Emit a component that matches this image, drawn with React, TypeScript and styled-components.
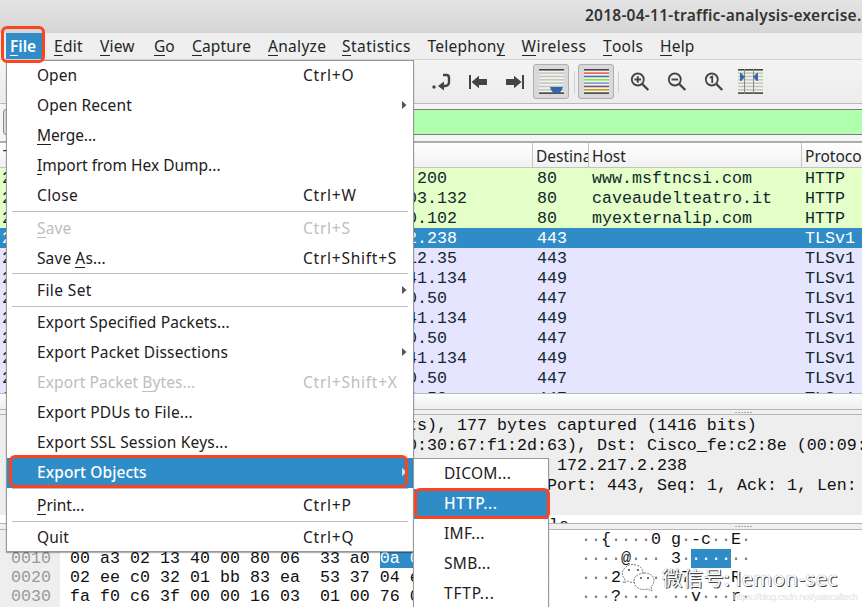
import React from 'react';
import styled, { createGlobalStyle } from 'styled-components';

const Global = createGlobalStyle`
  * { box-sizing: border-box; }
  html, body { margin: 0; background: #fff; overflow: hidden; }
  body { font: 15.5px "Noto Sans", "Noto Sans CJK SC", sans-serif; color: #232627; }
`;

const Window = styled.div`
  position: relative; width: 862px; height: 607px; overflow: hidden;
  display: flex; flex-direction: column; background: #f0f0f0;
`;
const TitleBar = styled.header`
  flex: 0 0 33px; padding-left: 585px; line-height: 31px; white-space: nowrap; overflow: hidden;
  font-weight: 600; font-size: 15.5px; letter-spacing: 0.24px; color: #333;
  background: linear-gradient(#e4e4e4, #d5d5d5);
`;
const MenuBar = styled.nav`
  flex: 0 0 27px; display: flex; padding-left: 6px; background: #efefef; border-bottom: 1px solid #d2d2d2;
`;
const MenuTitle = styled.div<{ $w: number; $on?: boolean; $ls?: number }>`
  width: ${p => p.$w}px; height: 26px; padding-left: 4px; line-height: 27px; white-space: nowrap;
  letter-spacing: ${p => p.$ls ?? 0}px;
  color: ${p => (p.$on ? '#fff' : '#232627')};
  font-weight: ${p => (p.$on ? 600 : 400)};
  background: ${p => (p.$on ? 'linear-gradient(90deg, #308cc6 36px, transparent 36px)' : 'none')};
`;
const Key = styled.span`
  border-bottom: 1px solid currentColor; display: inline-block; line-height: 17px;
`;
const ToolBar = styled.div`
  flex: 0 0 44px; display: flex; align-items: center; padding-left: 423px;
  background: linear-gradient(#f4f4f4, #ececec); border-bottom: 1px solid #b9b9b9;
`;
const Tool = styled.div<{ $w: number; $on?: boolean }>`
  width: ${p => p.$w}px; height: 35px; flex: none; display: flex; align-items: center; justify-content: center;
  border-radius: 3px; border: 1px solid ${p => (p.$on ? '#aeaeae' : 'transparent')};
  background: ${p => (p.$on ? '#d9d9d9' : 'transparent')};
`;
const Divider = styled.i<{ $l: number; $r: number }>`
  width: 1px; height: 22px; background: #cfcfcf; margin: 0 ${p => p.$r}px 0 ${p => p.$l}px;
`;
const FilterBar = styled.div`
  flex: 0 0 37px; padding: 5px 0 6px 3px; background: #f5f5f5; display: flex;
`;
const FilterButton = styled.div`
  width: 24px; background: #dcdcdc; border: 1px solid #8d8d8d; border-radius: 3px 0 0 3px;
`;
const FilterInput = styled.div`
  flex: 1; background: #afffaf; border: solid #7d7d7d; border-width: 1px 0;
`;
const ColumnHeads = styled.div`
  flex: 0 0 27px; display: flex; border-top: 2px solid #adadad; border-bottom: 1px solid #c4c4c4;
  background: linear-gradient(#fff, #f1f1f1);
`;
const Head = styled.div<{ $w: number; $line?: boolean }>`
  width: ${p => p.$w}px; height: 24px; padding-left: 3px; line-height: 26px; overflow: hidden; white-space: nowrap;
  font-size: 15.5px; border-left: ${p => (p.$line ? '1px solid #c4c4c4' : '0')};
`;
const mono = `font-family: "Liberation Mono", monospace; font-size: 16.67px; white-space: pre;`;
const Packets = styled.div`
  flex: 0 0 225px; overflow: hidden; background: #e6e5ff;
`;
const Packet = styled.div<{ $kind: string }>`
  ${mono}
  display: flex; height: 20px; line-height: 22px; padding-left: 2px;
  color: ${p => (p.$kind === 'sel' ? '#fff' : '#12272e')};
  background: ${p => (p.$kind === 'sel' ? '#308cc6' : p.$kind === 'http' ? '#e4ffc7' : '#e6e5ff')};
`;
const Cell = styled.span<{ $w: number }>`width: ${p => p.$w}px;`;
const ScrollTrack = styled.div`
  flex: 0 0 16px; background: linear-gradient(#fdfdfd, #eee); border-top: 1px solid #bbb;
`;
const Splitter = styled.div<{ $h?: number }>`
  flex: 0 0 ${p => p.$h ?? 6}px; border: solid #b5b5b5; border-width: 1px 0; background: #f0f0f0; padding-left: 735px;
  display: flex; align-items: center; gap: 1px;
`;
const Grip = styled.i`width: 2px; height: 1px; background: #a9a9a9;`;
const Details = styled.div`
  flex: 0 0 108px; background: #fff; overflow: hidden;
`;
const DetailRow = styled.div<{ $h?: number; $x?: number; $plain?: boolean }>`
  ${mono}
  height: ${p => p.$h ?? 20}px; line-height: 22px; color: #111;
  padding-left: ${p => p.$x ?? 407}px; background: ${p => (p.$plain ? '#fff' : '#eeeeee')}; overflow: hidden;
`;
const HexPane = styled.div`
  flex: 1; display: flex; background: #fff; overflow: hidden;
`;
const HexColumn = styled.div<{ $w: number; $pad: number; $dim?: boolean }>`
  ${mono}
  width: ${p => p.$w}px; flex: none; padding-left: ${p => p.$pad}px; line-height: 19px;
  color: ${p => (p.$dim ? '#999' : '#111')}; background: ${p => (p.$dim ? '#eee' : 'transparent')};
`;
const Mark = styled.span`background: #308cc6; color: #fff; display: inline-block; height: 19px; vertical-align: top;`;
const Dot = styled.span`color: #777;`;

const Popup = styled.div<{ $x: number; $y: number; $w: number; $h: number }>`
  position: absolute; left: ${p => p.$x}px; top: ${p => p.$y}px; width: ${p => p.$w}px; height: ${p => p.$h}px;
  background: #fff; border: 1px solid #999; color: #1d2021;
  box-shadow: 0 1px 1px rgba(0,0,0,.3);
`;
const Item = styled.div<{ $on?: boolean; $off?: boolean; $ls?: number }>`
  display: grid; grid-template-columns: 266px 98px 1fr; align-items: center; height: 30px; line-height: 20px;
  padding: 0 0 1.6px 30px; white-space: nowrap; letter-spacing: ${p => p.$ls ?? 0}px;
  color: ${p => (p.$on ? '#fff' : p.$off ? '#bcbebf' : '#1d2021')};
  background: ${p => (p.$on ? '#308cc6' : 'transparent')};
  font-weight: ${p => (p.$on ? 500 : 400)};
`;
const Shortcut = styled.span`letter-spacing: 0.75px;`;
const Rule = styled.div`height: 2.4px; margin: 0 5px; border-top: 1px solid #bdbdbd;`;
const Highlight = styled.div<{ $x: number; $y: number; $w: number; $h: number }>`
  position: absolute; left: ${p => p.$x}px; top: ${p => p.$y}px; width: ${p => p.$w}px; height: ${p => p.$h}px;
  border: 3px solid #fc4420; border-radius: 6px;
`;
const Watermark = styled.div`
  position: absolute; left: 621px; top: 562px; display: flex; align-items: center; gap: 6px; white-space: nowrap;
  font: 20.3px/32px "Noto Sans", "Noto Sans CJK SC", sans-serif; color: #fff; letter-spacing: 0.45px;
  text-shadow: 1px 1px 0 #444, 0 0 1px #777;
`;
const SiteMark = styled.div`
  position: absolute; left: 733px; top: 589px; font: 9.6px/16px "Liberation Sans", sans-serif; color: #e2e2e2;
  letter-spacing: -0.36px; white-space: nowrap;
`;

const label = (s: string) => {
  const i = s.indexOf('_');
  return i < 0 ? <span>{s}</span> : <span>{s.slice(0, i)}<Key>{s[i + 1]}</Key>{s.slice(i + 2)}</span>;
};
const Arrow = ({ c = '#555' }: { c?: string }) => (
  <svg width="6" height="10" viewBox="0 0 6 10"><path d="M1 1L5.500 5L1 9Z" fill={c} /></svg>
);
const dots = (s: string) => s.split('').map((c, i) => (c === '·' ? <Dot key={i}>·</Dot> : c));

const menus: [string, number, number][] = [
  ['_Edit', 46, 0.3], ['_View', 54, 0.2], ['_Go', 38, 0], ['_Capture', 76, 0.15], ['_Analyze', 74, 0.3],
  ['_Statistics', 85.5, 0.45], ['Telephon_y', 94, 0.25], ['_Wireless', 81.5, 0.5], ['_Tools', 57, 0.3], ['_Help', 50, 0.2],
];
type Entry = { t: string; k?: string; sub?: boolean; off?: boolean; on?: boolean; ls?: number } | null;
const fileMenu: Entry[] = [
  { t: 'Open', k: 'Ctrl+O' }, { t: 'Open Recent', sub: true, ls: 0.1 }, { t: '_Merge...', ls: -0.1 },
  { t: '_Import from Hex Dump...' }, { t: 'Close', k: 'Ctrl+W', ls: 0.35 }, null,
  { t: '_Save', k: 'Ctrl+S', off: true, ls: 0.1 }, { t: 'Save _As...', k: 'Ctrl+Shift+S', ls: 0.1 }, null,
  { t: 'File Set', sub: true, ls: 0.4 }, null,
  { t: 'Export Specified Packets...', ls: 0.12 }, { t: 'Export Packet Dissections', sub: true, ls: 0.2 },
  { t: 'Export Packet _Bytes...', k: 'Ctrl+Shift+X', off: true, ls: 0.1 }, { t: 'Export PDUs to File...', ls: 0.2 },
  { t: 'Export SSL Session Keys...', ls: 0.2 }, { t: 'Export Objects', sub: true, on: true, ls: 0.08 }, null,
  { t: '_Print...', k: 'Ctrl+P' }, null, { t: 'Quit', k: 'Ctrl+Q', ls: 0.15 },
];
const exportMenu: [string, number][] = [['DICOM...', 0.3], ['HTTP...', 0.6], ['IMF...', 0.3], ['SMB...', 0.3], ['TFTP...', 0.8]];
const packets: [string, string, string, string, string][] = [
  ['http', '.200', '80', 'www.msftncsi.com', 'HTTP'],
  ['http', '03.132', '80', 'caveaudelteatro.it', 'HTTP'],
  ['http', '0.102', '80', 'myexternalip.com', 'HTTP'],
  ['sel', '2.238', '443', '', 'TLSv1'],
  ['tls', '12.35', '443', '', 'TLSv1'],
  ['tls', '41.134', '449', '', 'TLSv1'],
  ['tls', '0.50', '447', '', 'TLSv1'],
  ['tls', '41.134', '449', '', 'TLSv1'],
  ['tls', '0.50', '447', '', 'TLSv1'],
  ['tls', '41.134', '449', '', 'TLSv1'],
  ['tls', '0.50', '447', '', 'TLSv1'],
  ['tls', '0.50', '447', '', 'TLSv1'],
];

const GoTo = () => (
  <svg width="22" height="20" viewBox="0 0 22 20">
    <circle cx="4" cy="15" r="1.7" fill="#444" />
    <path d="M13 3h3.500q2.500 0 2.500 3v4q0 4-4 4h-2" fill="none" stroke="#444" strokeWidth="2.4" />
    <path d="M8 14l6-4.500v9z" fill="#444" />
  </svg>
);
const Jump = ({ right }: { right?: boolean }) => (
  <svg width="20" height="16" viewBox="0 0 20 16">
    <g transform={right ? 'translate(20 0) scale(-1 1)' : undefined} fill="#444">
      <rect x="1" y="1" width="2" height="14" />
      <path d="M3.500 8L11 1.800V5h8v6h-8v3.200z" />
    </g>
  </svg>
);
const Lines = ({ colors, children }: { colors: string[]; children?: React.ReactNode }) => (
  <svg width="25" height="27" viewBox="0 0 25 27">
    <rect x="0" y="1" width="25" height="25" fill="#f3f3ef" />
    {colors.map((c, i) => <rect key={i} x="0" y={1 + i * 3.33} width="25" height="1.6" fill={c} />)}
    {children}
  </svg>
);
const g = '#c4c7bd';
const Zoom = ({ kind }: { kind: string }) => (
  <svg width="20" height="20" viewBox="0 0 20 20" fill="none" stroke="#444">
    <circle cx="7.8" cy="7.5" r="6" strokeWidth="1.8" />
    <path d="M12.300 12l6 6" strokeWidth="2.4" />
    {kind === '1'
      ? <path d="M5.800 5.800L8.200 4.600V11" strokeWidth="1.8" />
      : <path d={kind === '+' ? 'M4.500 7.500h6.600M7.800 4.200v6.600' : 'M4.500 7.500h6.600'} strokeWidth="1.9" />}
  </svg>
);
const Grips = () => <>{[0, 1, 2, 3, 4, 5].map(i => <Grip key={i} />)}</>;

export default function App() {
  return (
    <>
      <Global />
      <Window>
        <TitleBar>2018-04-11-traffic-analysis-exercise.</TitleBar>
        <MenuBar>
          <MenuTitle $w={44} $on>{label('_File')}</MenuTitle>
          {menus.map(([t, w, ls]) => <MenuTitle key={t} $w={w} $ls={ls}>{label(t)}</MenuTitle>)}
        </MenuBar>
        <ToolBar>
          <Tool $w={36}><GoTo /></Tool>
          <Tool $w={37}><Jump /></Tool>
          <Tool $w={37}><Jump right /></Tool>
          <Tool $w={36} $on>
            <Lines colors={['#444', g, g, g, g, g, g, '#444']}>
              <path d="M11 19h13q-.5 3-3.500 6h-6q-3-2.500-3.500-6z" fill="#3465a4" />
            </Lines>
          </Tool>
          <Divider $l={5} $r={3} />
          <Tool $w={36} $on>
            <Lines colors={['#444', '#ef5656', '#3d71b3', '#8ae234', '#729fcf', '#75507b', '#c4a000', '#444']} />
          </Tool>
          <Divider $l={4} $r={2} />
          <Tool $w={37}><Zoom kind="+" /></Tool>
          <Tool $w={37}><Zoom kind="-" /></Tool>
          <Tool $w={37}><Zoom kind="1" /></Tool>
          <Tool $w={37}>
            <Lines colors={['#444', g, g, g, g, g, g, '#444']}>
              <path d="M6.500 1v25M15.500 1v25" stroke="#888" strokeWidth="1" />
              <path d="M2.500 5l4 4-4 4zM19.500 5l-4 4 4 4z" fill="#3465a4" stroke="#3465a4" />
            </Lines>
          </Tool>
        </ToolBar>
        <FilterBar><FilterButton /><FilterInput /></FilterBar>
        <ColumnHeads>
          <Head $w={532}><span>Time</span></Head>
          <Head $w={56} $line>Destination</Head>
          <Head $w={213} $line>Host</Head>
          <Head $w={61} $line>Protocol</Head>
        </ColumnHeads>
        <Packets>
          {packets.map(([kind, ip, port, host, proto], i) => (
            <Packet key={i} $kind={kind}>
              <Cell $w={405}>2</Cell><Cell $w={130}>{ip}</Cell><Cell $w={55}>{port}</Cell>
              <Cell $w={213}>{host}</Cell><Cell $w={57}>{proto}</Cell>
            </Packet>
          ))}
        </Packets>
        <ScrollTrack />
        <Splitter><Grips /></Splitter>
        <Details>
          <DetailRow>{'ts), 177 bytes captured (1416 bits)'}</DetailRow>
          <DetailRow>{'0:30:67:f1:2d:63), Dst: Cisco_fe:c2:8e (00:09:'}</DetailRow>
          <DetailRow $x={557}>172.217.2.238</DetailRow>
          <DetailRow $x={547}>Port: 443, Seq: 1, Ack: 1, Len:</DetailRow>
          <DetailRow $h={20} />
          <DetailRow $x={549} $plain $h={8}>le</DetailRow>
        </Details>
        <Splitter $h={7}><Grips /></Splitter>
        <HexPane>
          <HexColumn $w={60} $pad={11} $dim>{'0000\n0010\n0020\n0030'}</HexColumn>
          <HexColumn $w={521} $pad={10}>
            {'00 09 b7 fe c2 8e 00 30  67 f1 2d 63 08 00 45 00\n00 a3 02 13 40 00 80 06  33 a0 '}
            <Mark>0a 04 0b c9</Mark>
            {' ac d9\n02 ee c0 32 01 bb 83 ea  53 37 04 e5 b2 16 52 18\nfa f0 c6 3f 00 00 16 03  01 00 76 01 00 00 72 03'}
          </HexColumn>
          <HexColumn $w={281} $pad={0}>
            {dots('··{····0 g·-c··E·\n····@··· 3·')}<Mark>····</Mark>
            {dots('··\n···2···· S7····R·\n···?···· ··v···r·')}
          </HexColumn>
        </HexPane>

        <Popup $x={6} $y={60} $w={408} $h={492}>
          {fileMenu.map((m, i) => m ? (
            <Item key={i} $on={m.on} $off={m.off} $ls={m.ls}>
              {label(m.t)}<Shortcut>{m.k}</Shortcut>
              {m.sub && <Arrow c={m.on ? '#cfe3f1' : undefined} />}
            </Item>
          ) : <Rule key={i} />)}
        </Popup>
        <Popup $x={413} $y={458} $w={136} $h={160}>
          {exportMenu.map(([t, ls]) => (
            <Item key={t} $on={t === 'HTTP...'} $ls={ls}>{t}</Item>
          ))}
        </Popup>
        <Highlight $x={1} $y={26} $w={44} $h={37} />
        <Highlight $x={9} $y={455} $w={399} $h={33} />
        <Highlight $x={414} $y={488} $w={136} $h={31} />
        <SiteMark>https://blog.csdn.net/yalecaltech</SiteMark>
        <Watermark>
          <svg width="35" height="30" viewBox="0 0 35 30" fill="#fff" stroke="#666" strokeWidth=".9" strokeDasharray="2 1">
            <path d="M14 19Q10 20 7 18L2.500 20L4 16Q-1 11 3 6Q8 0 15 2Q22 4 22 10" />
            <path d="M23 10Q32 10 33 17Q33 21 30 24L31 28L27 26Q18 28 14 22Q10 12 23 10Z" />
            <path d="M7 7h2M16 7h2M19 15h2M26 15h2" stroke="#444" strokeWidth="1.600" />
          </svg>
          <span>微信号: lemon-sec</span>
        </Watermark>
      </Window>
    </>
  );
}
